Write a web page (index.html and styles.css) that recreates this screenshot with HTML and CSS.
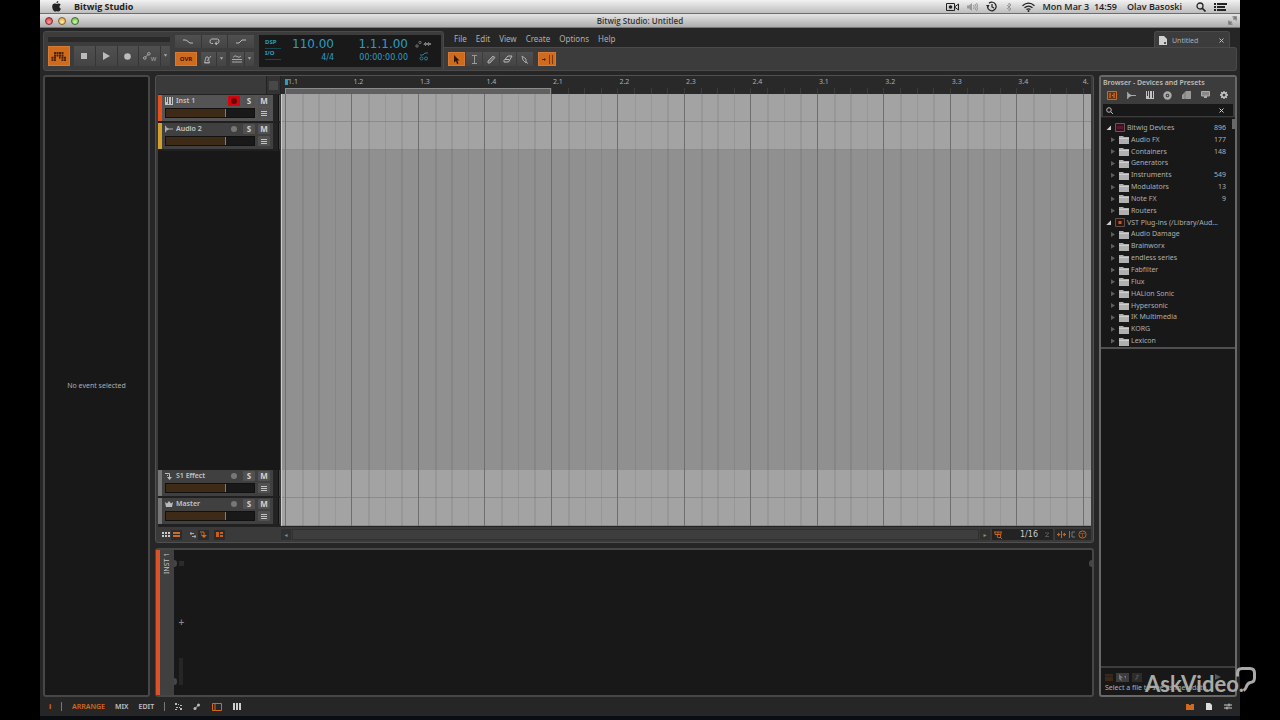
FILE: index.html
```html
<!DOCTYPE html>
<html lang="en">
<head>
<meta charset="utf-8">
<title>Bitwig Studio: Untitled</title>
<link rel="stylesheet" href="styles.css">
</head>
<body>
<svg class="defs" aria-hidden="true">
  <symbol id="folder" viewBox="0 0 10 9"><path d="M0 1h4l1 1h5v7H0z" fill="#b0b0b0"/><path d="M0 3h10v1H0z" fill="#cfcfcf"/></symbol>
  <symbol id="lines" viewBox="0 0 6 5"><path d="M0 0h6v1H0zM0 2h6v1H0zM0 4h6v1H0z" fill="#c2c2c2" shape-rendering="crispEdges"/></symbol>
  <symbol id="keys" viewBox="0 0 8 8"><path d="M0 0h1v5h1V0h1v7h1V0h1v5h0V0h1v7h1V0h1v8H0z" fill="#c4c4c4" shape-rendering="crispEdges"/></symbol>
  <symbol id="wave" viewBox="0 0 10 8"><path d="M0 0h1l1 2 3 1.500h5v1H5L2 6 1 8H0z" fill="#a9a9a9"/></symbol>
  <symbol id="down" viewBox="0 0 6 4"><path d="M1 0h4L3 3z" fill="#aaa"/></symbol>
</svg>
<div class="desktop">
  <div class="macbar">
    <svg class="apple" viewBox="0 0 12 12"><path d="M8 0C6.500.3 5.800 1.300 6 2.500 7.300 2.400 8 1.300 8 0M6 3.300C4.500 2.500 1.500 2.400 1.300 6c0 2.500 1.600 5.500 3 5.500.8 0 1-.4 1.900-.4s1.200.4 2 .4c1.200 0 2.200-1.900 2.600-3C8.800 7.600 8.700 4.900 10.500 4 9.200 2.300 7.200 2.800 6 3.300" fill="#222"/></svg>
    <b class="appname">Bitwig Studio</b>
    <div class="status">
      <svg width="13" height="10" viewBox="0 0 13 10"><path d="M.5 1.500h8v7h-8zM8.500 5l4-3v6z" fill="none" stroke="#222"/><circle cx="4.500" cy="5" r="1.800" fill="#222"/></svg>
      <svg width="11" height="10" viewBox="0 0 11 10"><path d="M0 3.500h2L5 1v8L2 6.500H0z" fill="#999"/><path d="M6.500 3q1.500 2 0 4M8 2q2.500 3 0 6M9.500 1q3 4 0 8" fill="none" stroke="#888" stroke-width=".8"/></svg>
      <svg width="11" height="11" viewBox="0 0 11 11"><path d="M1.500 6A4.300 4.300 0 1 0 3 2.200M6 3v3l2 1" fill="none" stroke="#222" stroke-width="1.200"/><path d="M0 4h3.500L2 7z" fill="#222"/></svg>
      <svg width="9" height="10" viewBox="0 0 7 10"><path d="M1 3l4 4-2 2V1l2 2-4 4" fill="none" stroke="#999"/></svg>
      <svg width="13" height="10" viewBox="0 0 13 10"><path d="M.5 3.800Q6.500-1.500 12.500 3.800M2.500 5.800q4-3.400 8 0M4.500 7.600q2-1.600 4 0" fill="none" stroke="#222" stroke-width="1.300"/><circle cx="6.500" cy="9" r="1" fill="#222"/></svg>
      <span>Mon Mar 3&nbsp; 14:59</span>
      <span class="user">Olav Basoski</span>
      <svg width="10" height="10" viewBox="0 0 10 10"><circle cx="4" cy="4" r="3" fill="none" stroke="#222" stroke-width="1.300"/><path d="M6 6l3.500 3.500" stroke="#222" stroke-width="1.600"/></svg>
      <svg width="13" height="10" viewBox="0 0 13 10"><path d="M0 1h2v2H0zM3 1h10v2H3zM0 4h2v2H0zM3 4h8v2H3zM0 7h2v2H0zM3 7h9v2H3z" fill="#222"/></svg>
    </div>
  </div>
  <div class="titlebar">
    <div class="lights"><button class="light red" aria-label="Close"></button><button class="light yellow" aria-label="Minimise"></button><button class="light green" aria-label="Zoom"></button></div>
    <span class="wintitle">Bitwig Studio: Untitled</span>
    <svg class="expand" viewBox="0 0 10 10"><path d="M5 1h4v4M9 1L6 4M1 5v4h4M1 9l3-3" fill="none" stroke="#777" stroke-width="1.500"/></svg>
  </div>

  <header class="top">
    <div class="deck">
      <div class="transport">
        <div class="strip"></div>
        <div class="btns">
          <button class="btn on logo" aria-label="Bitwig"><svg width="16" height="9" viewBox="0 0 16 9"><path d="M3 0h2v2H3zM5.500 0h2v2h-2zM8 0h2v2H8zM10.500 0h2v2h-2zM3 2.400h2v2H3zM5.500 2.400h2v2h-2zM8 2.400h2v2H8zM10.500 2.400h2v2h-2zM.5 4.800h2v2h-2zM3 4.800h2v2H3zM8 4.800h1.500v2H8zM10.500 4.800h2v2h-2zM13 4.800h2v2h-2zM.5 7.200h2V9h-2zM3 7.200h2V9H3zM10.500 7.200h2V9h-2zM13 7.200h2V9h-2z" fill="#4a2209"/></svg></button>
          <div class="group">
            <button class="btn" aria-label="Stop"><svg width="6" height="6"><path d="M0 0h6v6H0z" fill="#bbb"/></svg></button>
            <button class="btn" aria-label="Play"><svg width="7" height="8"><path d="M0 0l7 4-7 4z" fill="#bbb"/></svg></button>
            <button class="btn" aria-label="Record"><svg width="7" height="7"><circle cx="3.500" cy="3.500" r="3.300" fill="#bbb"/></svg></button>
            <button class="btn" aria-label="Automation write"><svg width="8" height="8" viewBox="0 0 8 8"><circle cx="1.800" cy="6" r="1.300" fill="none" stroke="#aaa"/><path d="M2.500 5L5 2.500" stroke="#aaa"/><circle cx="5.800" cy="1.800" r="1.300" fill="none" stroke="#aaa"/></svg><small>W</small></button>
            <button class="btn slim" aria-label="Options"><svg width="5" height="4"><use href="#down"/></svg></button>
          </div>
        </div>
      </div>
      <div class="modes">
        <div class="group low">
          <button class="btn" aria-label="Punch in"><svg width="10" height="5" viewBox="0 0 10 5"><path d="M0 1h3l4 3h3" fill="none" stroke="#bbb"/></svg></button>
          <button class="btn" aria-label="Loop"><svg width="11" height="7" viewBox="0 0 11 7"><path d="M4 5.500H2.500Q1 5.500 1 3.500T2.500 1h6Q10 1 10 3.200T8.500 5.500H6.500M8 3.500L6 5.500l2 1.500" fill="none" stroke="#bbb"/></svg></button>
          <button class="btn" aria-label="Punch out"><svg width="10" height="5" viewBox="0 0 10 5"><path d="M0 4h3l3-3h4" fill="none" stroke="#bbb"/></svg></button>
        </div>
        <div class="modes2">
          <button class="btn on ovr">OVR</button>
          <div class="group"><button class="btn" aria-label="Metronome"><svg width="8" height="9" viewBox="0 0 8 9"><path d="M2 2h2l1.500 6H.5zM3 6l4-5M1 7.500h4" fill="none" stroke="#aaa"/></svg></button><button class="btn slim" aria-label="Metronome options"><svg width="5" height="4"><use href="#down"/></svg></button></div>
          <div class="group"><button class="btn" aria-label="Groove"><svg width="10" height="8" viewBox="0 0 10 8"><path d="M1 2.500q2-3 4-1t4-.5M0 4.500h10M0 7h10" fill="none" stroke="#aaa"/></svg></button><button class="btn slim" aria-label="Groove options"><svg width="5" height="4"><use href="#down"/></svg></button></div>
        </div>
      </div>
      <div class="display">
        <div class="load"><span>DSP</span><i></i><span>I/O</span><i></i></div>
        <div class="nums"><span class="big">110.00</span><span>4/4</span></div>
        <div class="nums pos"><span class="big">1.1.1.00</span><span>00:00:00.00</span></div>
        <div class="dicons">
          <svg width="17" height="9" viewBox="0 0 17 9"><circle cx="2" cy="6" r="1.200" fill="none" stroke="#777"/><circle cx="5" cy="2.500" r="1.200" fill="none" stroke="#777"/><path d="M8 4h1V3h1V2h1v1h2V2h1v1h2v2h-2v1h-1V5h-2v1h-1V5H9z" fill="#777"/></svg>
          <svg width="10" height="9" viewBox="0 0 10 9"><circle cx="2.500" cy="6.500" r="1.500" fill="none" stroke="#287f9b"/><circle cx="7" cy="6.500" r="1.500" fill="none" stroke="#287f9b"/><path d="M1 3h3l2-2h3" fill="none" stroke="#287f9b"/></svg>
        </div>
      </div>
    </div>
    <div class="topright">
      <div class="menurow">
        <nav class="menu"><a href="#">File</a><a href="#">Edit</a><a href="#">View</a><a href="#">Create</a><a href="#">Options</a><a href="#">Help</a></nav>
        <div class="tab"><svg width="8" height="9" viewBox="0 0 8 9"><path d="M0 0h5l3 3v6H0z" fill="#d0d0d0"/><path d="M5 6h2v2H5z" fill="#555"/></svg><span>Untitled</span><button class="x" aria-label="Close tab"><svg width="5" height="5"><path d="M.5.5l4 4M4.500.5l-4 4" stroke="#bbb"/></svg></button></div>
      </div>
      <div class="tools">
        <button class="btn on" aria-label="Pointer"><svg width="7" height="9" viewBox="0 0 7 9"><path d="M1 0l5.500 5.500H4.200L5.500 8.500 4 9 3 6 1 7.500z" fill="#301505"/></svg></button>
        <button class="btn" aria-label="Time selection"><svg width="7" height="9" viewBox="0 0 7 9"><path d="M1 .5h5M1 8.500h5M3.500 0v9" stroke="#999"/></svg></button>
        <button class="btn" aria-label="Pen"><svg width="9" height="9" viewBox="0 0 9 9"><path d="M1 6L6 1l2 1.500L3 8H1z" fill="#777" stroke="#aaa"/></svg></button>
        <button class="btn" aria-label="Eraser"><svg width="10" height="8" viewBox="0 0 10 8"><path d="M1 5.500L5 1h4L5.500 7H1zM2 4.500h4" fill="none" stroke="#bbb"/></svg></button>
        <button class="btn" aria-label="Knife"><svg width="8" height="9" viewBox="0 0 8 9"><path d="M1 1l4 3v4L2 5zM5 7l2 1.500" fill="none" stroke="#aaa"/></svg></button>
        <button class="btn on wide" aria-label="Snap"><svg width="12" height="9" viewBox="0 0 12 9"><path d="M1 4h2V3l2 1.500L3 6V5H1z" fill="#54240a"/><path d="M8.500 0v9M11.500 0v9" stroke="#7c3810"/></svg></button>
      </div>
    </div>
  </header>

  <main class="work">
    <aside class="inspector">No event selected</aside>
    <div class="center">
      <section class="arranger">
        <div class="rulerrow">
          <div class="blank"></div>
          <div class="corner"><i></i></div>
          <div class="ruler">
            <div class="rbeats">
              <span class="first">1.1</span><span>1.2</span><span>1.3</span><span>1.4</span><span>2.1</span><span>2.2</span><span>2.3</span><span>2.4</span><span>3.1</span><span>3.2</span><span>3.3</span><span>3.4</span><span class="last">4.</span>
            </div>
            <div class="looprow"><div class="loop"></div></div>
          </div>
        </div>
        <div class="tracks">
          <div class="heads">
            <div class="track sel">
              <i class="color c1"></i>
              <div class="name"><svg width="8" height="8"><use href="#keys"/></svg>Inst 1</div>
              <button class="tb rec armed" aria-label="Record arm"></button><button class="tb">S</button><button class="tb">M</button>
              <input class="vol" type="range" min="0" max="90" value="61" aria-label="Inst 1 volume"><button class="tb list" aria-label="Lanes"><svg width="6" height="5"><use href="#lines"/></svg></button>
              <i class="meter"></i>
            </div>
            <div class="track">
              <i class="color c2"></i>
              <div class="name"><svg width="8" height="8"><use href="#wave"/></svg>Audio 2</div>
              <button class="tb rec" aria-label="Record arm"></button><button class="tb">S</button><button class="tb">M</button>
              <input class="vol" type="range" min="0" max="90" value="61" aria-label="Audio 2 volume"><button class="tb list" aria-label="Lanes"><svg width="6" height="5"><use href="#lines"/></svg></button>
              <i class="meter"></i>
            </div>
            <div class="void"></div>
            <div class="track">
              <i class="color c3"></i>
              <div class="name"><svg width="8" height="8" viewBox="0 0 8 8"><path d="M0 1.500h4.500V6" fill="none" stroke="#bbb"/><path d="M2 5h5L4.500 8zM2 3h1v1H2z" fill="#bbb"/></svg>S1 Effect</div>
              <button class="tb rec" aria-label="Record arm"></button><button class="tb">S</button><button class="tb">M</button>
              <input class="vol" type="range" min="0" max="90" value="61" aria-label="S1 Effect volume"><button class="tb list" aria-label="Lanes"><svg width="6" height="5"><use href="#lines"/></svg></button>
              <i class="meter"></i>
            </div>
            <div class="track">
              <i class="color c3"></i>
              <div class="name"><svg width="8" height="8" viewBox="0 0 8 8"><path d="M0 2l2 1.500L4 1l2 2.500L8 2 7 7H1z" fill="#bbb"/></svg>Master</div>
              <button class="tb rec" aria-label="Record arm"></button><button class="tb">S</button><button class="tb">M</button>
              <input class="vol" type="range" min="0" max="90" value="61" aria-label="Master volume"><button class="tb list" aria-label="Lanes"><svg width="6" height="5"><use href="#lines"/></svg></button>
              <i class="meter"></i>
            </div>
          </div>
          <div class="canvas">
            <div class="lanes"><i class="lane"></i><i class="lane"></i><i class="empty"></i><i class="lane"></i><i class="lane"></i></div>
            <div class="beats"><i></i><i></i><i></i><i></i><i></i><i></i><i></i><i></i><i></i><i></i><i></i><i></i><i></i></div>
          </div>
        </div>
        <div class="arrfoot">
          <div class="views">
            <button class="ib" aria-label="Clip launcher"><svg width="8" height="5" viewBox="0 0 8 5"><path d="M0 0h2v2H0zM3 0h2v2H3zM6 0h2v2H6zM0 3h2v2H0zM3 3h2v2H3zM6 3h2v2H6z" fill="#ccc"/></svg></button>
            <button class="ib dark" aria-label="Arranger"><svg width="7" height="5" viewBox="0 0 7 5"><path d="M0 0h7v2H0zM0 3h7v2H0z" fill="#d3691e"/></svg></button>
            <button class="ib gap" aria-label="Input output"><svg width="6" height="6" viewBox="0 0 6 6"><path d="M0 1.500h4M2 4.500h4M1 0v3M5 3v3" stroke="#aaa"/></svg></button>
            <button class="ib dark" aria-label="Effects"><svg width="7" height="7" viewBox="0 0 7 7"><path d="M0 1h4v3" fill="none" stroke="#d3691e"/><path d="M1 4h6L4 7zM1 2.500h1v1H1z" fill="#d3691e"/></svg></button>
            <button class="ib dark gap2" aria-label="Track size"><svg width="7" height="5" viewBox="0 0 7 5"><path d="M0 0h3v5H0zM4 0h3v2H4zM4 3h3v2H4z" fill="#c8601a"/></svg></button>
          </div>
          <div class="scroll"><button class="sb" aria-label="Scroll left">◂</button><div class="bar"></div><button class="sb" aria-label="Scroll right">▸</button></div>
          <div class="grid16">
            <svg width="9" height="8" viewBox="0 0 9 8"><path d="M0 1h8M1 3.500h6M1 1v2.500M4 1v2.500M7 1v2.500" stroke="#c8641c"/><circle cx="5" cy="5" r="1.800" fill="none" stroke="#c8641c"/><path d="M6 6l2 2" stroke="#c8641c"/></svg>
            <select aria-label="Grid"><option>1/16</option></select>
            <svg width="5" height="5"><path d="M0 1h4M1 4l3-3M0 4.500h4" stroke="#555"/></svg>
          </div>
          <div class="snaps">
            <svg width="9" height="7" viewBox="0 0 9 7"><path d="M4.500 0v7" stroke="#c8641c"/><path d="M0 3h1V1.500l2.500 2L1 5.500V4H0zM9 3H8V1.500l-2.500 2 2.500 2V4h1z" fill="#c8641c"/></svg>
            <svg width="6" height="7" viewBox="0 0 6 7"><path d="M.5 0v7M6 1H3v5h3" fill="none" stroke="#777"/></svg>
            <svg width="9" height="9" viewBox="0 0 9 9"><circle cx="4.500" cy="4.500" r="3.600" fill="none" stroke="#c8641c"/><path d="M4.500 3v4M1 3.500h7" stroke="#8c4513"/></svg>
          </div>
        </div>
      </section>
      <section class="device">
        <i class="dcolor"></i>
        <div class="dname">INST 1</div>
        <div class="dbody">
          <div class="dside top1"><i class="half"></i><i class="sq"></i></div>
          <span class="plus">+</span>
          <div class="dside"><i class="half"></i><i class="lv"></i></div>
        </div>
        <i class="half right"></i>
      </section>
    </div>

    <aside class="browser">
      <h2>Browser - Devices and Presets</h2>
      <div class="btabs">
        <button class="ib" aria-label="Devices"><svg width="10" height="9" viewBox="0 0 10 9"><path d="M.5.500h9v8h-9z" fill="#6b330d" stroke="#d06a20"/><path d="M3 2v5M5 4.500h1M7 2v5" stroke="#e08030"/></svg></button>
        <button class="ib" aria-label="Samples"><svg width="9" height="7"><use href="#wave"/></svg></button>
        <button class="ib" aria-label="Presets"><svg width="8" height="8"><use href="#keys"/></svg></button>
        <button class="ib" aria-label="Multisamples"><svg width="9" height="9"><circle cx="4.500" cy="4.500" r="3" fill="none" stroke="#aaa" stroke-width="2.400"/><circle cx="4.500" cy="4.500" r=".8" fill="#aaa"/></svg></button>
        <button class="ib" aria-label="Clips"><svg width="9" height="8"><path d="M0 8V4l4-4h5v8z" fill="#999"/><path d="M3 1v7" stroke="#777"/></svg></button>
        <button class="ib" aria-label="Files"><svg width="9" height="8"><path d="M.5 .5h8V5h-8z" fill="#888" stroke="#aaa"/><path d="M3 7h3V5H3z" fill="#aaa"/></svg></button>
        <button class="ib" aria-label="Settings"><svg width="8" height="8" viewBox="0 0 8 8"><circle cx="4" cy="4" r="2.200" fill="none" stroke="#ccc" stroke-width="1.400"/><path d="M4 0v1.500M4 6.500V8M0 4h1.500M6.500 4H8M1.200 1.200l1 1M5.800 5.800l1 1M1.200 6.800l1-1M5.800 2.200l1-1" stroke="#ccc" stroke-width="1.300"/></svg></button>
      </div>
      <div class="search">
        <svg width="7" height="7" viewBox="0 0 7 7"><circle cx="3" cy="3" r="2.300" fill="none" stroke="#bbb"/><path d="M4.600 4.600L7 7" stroke="#bbb"/></svg>
        <input type="text" aria-label="Search">
        <button class="x" aria-label="Clear"><svg width="5" height="5"><path d="M.5.500l4 4M4.500.500l-4 4" stroke="#ccc"/></svg></button>
      </div>
      <div class="results">
        <i class="thumb"></i>
        <ul class="tree">
          <li class="root"><i class="open"></i><svg width="10" height="9"><path d="M.5.500h9v8h-9z" fill="#3c0f1c" stroke="#5e5e5e"/><path d="M3 3v3M5 3v3M7 3v3" stroke="#7c2340"/></svg><span>Bitwig Devices</span><b>896</b></li>
          <li><i></i><svg width="10" height="9"><use href="#folder"/></svg><span>Audio FX</span><b>177</b></li>
          <li><i></i><svg width="10" height="9"><use href="#folder"/></svg><span>Containers</span><b>148</b></li>
          <li><i></i><svg width="10" height="9"><use href="#folder"/></svg><span>Generators</span></li>
          <li><i></i><svg width="10" height="9"><use href="#folder"/></svg><span>Instruments</span><b>549</b></li>
          <li><i></i><svg width="10" height="9"><use href="#folder"/></svg><span>Modulators</span><b>13</b></li>
          <li><i></i><svg width="10" height="9"><use href="#folder"/></svg><span>Note FX</span><b>9</b></li>
          <li><i></i><svg width="10" height="9"><use href="#folder"/></svg><span>Routers</span></li>
          <li class="root"><i class="open"></i><svg width="10" height="9"><path d="M.5.500h9v8h-9z" fill="#2c1510" stroke="#5e5048"/><path d="M3.500 3h3v3h-3z" fill="#d0532c"/></svg><span>VST Plug-ins (/Library/Aud...</span></li>
          <li><i></i><svg width="10" height="9"><use href="#folder"/></svg><span>Audio Damage</span></li>
          <li><i></i><svg width="10" height="9"><use href="#folder"/></svg><span>Brainworx</span></li>
          <li><i></i><svg width="10" height="9"><use href="#folder"/></svg><span>endless series</span></li>
          <li><i></i><svg width="10" height="9"><use href="#folder"/></svg><span>Fabfilter</span></li>
          <li><i></i><svg width="10" height="9"><use href="#folder"/></svg><span>Flux</span></li>
          <li><i></i><svg width="10" height="9"><use href="#folder"/></svg><span>HALion Sonic</span></li>
          <li><i></i><svg width="10" height="9"><use href="#folder"/></svg><span>Hypersonic</span></li>
          <li><i></i><svg width="10" height="9"><use href="#folder"/></svg><span>IK Multimedia</span></li>
          <li><i></i><svg width="10" height="9"><use href="#folder"/></svg><span>KORG</span></li>
          <li><i></i><svg width="10" height="9"><use href="#folder"/></svg><span>Lexicon</span></li>
        </ul>
      </div>
      <div class="detail"></div>
      <div class="preview">
        <div class="picons">
          <svg width="8" height="7"><path d="M0 0h8v7H0z" fill="#3c2814"/><path d="M0 2.500h8" stroke="#222"/></svg>
          <svg width="13" height="9"><path d="M0 0h13v9H0z" fill="#3d3d3d"/><path d="M3 1l4 4H5l1 3-3-2zM8 3h2v3" fill="#777"/></svg>
          <svg width="10" height="9"><path d="M0 0h10v9H0z" fill="#2c2c2c"/><path d="M5 2v4H3M5 2l2 1" fill="none" stroke="#555"/></svg>
          <svg class="pplay" width="6" height="6"><path d="M0 0l6 3-6 3z" fill="#555"/></svg>
        </div>
        <p>Select a file to see its metadata.</p>
      </div>
    </aside>
  </main>

  <footer class="foot">
    <b class="or info">i</b><i class="sep"></i>
    <button class="or mode">ARRANGE</button><button class="mode">MIX</button><button class="mode">EDIT</button><i class="sep"></i>
    <button class="ib" aria-label="Clips"><svg width="7" height="7"><path d="M0 0h2v2H0zM3 1h1v1H3zM5 2h2v1H5zM1 4h2v1H1zM4 4h1v1H4zM0 6h2v1H0zM5 5h2v2H5z" fill="#bbb"/></svg></button>
    <button class="ib" aria-label="Automation"><svg width="8" height="8"><circle cx="2" cy="5.500" r="1.500" fill="#bbb"/><circle cx="5.500" cy="2" r="1.500" fill="#bbb"/><path d="M2 5.500L5.500 2" stroke="#bbb"/></svg></button>
    <button class="ib" aria-label="Devices"><svg width="10" height="8"><path d="M.5.500h9v7h-9zM3 .5v7" fill="none" stroke="#d3691e"/></svg></button>
    <button class="ib" aria-label="Mixer"><svg width="8" height="7"><path d="M0 0h2v7H0zM3 0h2v7H3zM6 0h2v7H6z" fill="#ccc"/></svg></button>
    <div class="footright">
      <button class="ib" aria-label="Browser"><svg width="8" height="6"><path d="M0 0h3v1h2V0h3v6H0z" fill="#d3691e"/></svg></button>
      <button class="ib" aria-label="Project"><svg width="6" height="7"><path d="M0 0h4l2 2v5H0z" fill="#ddd"/></svg></button>
      <button class="ib" aria-label="Mappings"><svg width="8" height="7"><path d="M0 2h8M0 5h8M5 .5v3M3 3.500v3" stroke="#ccc"/></svg></button>
    </div>
  </footer>
</div>
<div class="watermark"><span>AskVideo.</span><svg width="20" height="26" viewBox="0 0 20 26"><path d="M1.500 9.500V6q0-4.500 4.500-4.500h8q4.500 0 4.500 4.500v5q0 4-4 4.500-3 .5-4.500 5-.8 2-2.500 3" fill="none" stroke="#a9aaa7" stroke-width="3" stroke-linejoin="round"/></svg></div>
</body>
</html>
```
FILE: styles.css
```css
* { box-sizing: border-box; }
body { margin: 0; background: #000; color: #aeaeae; font: 7px/10px "Noto Sans", "Open Sans", sans-serif; }
button, input, select { font: inherit; color: inherit; border: 0; padding: 0; margin: 0; background: none; }
svg { display: block; flex: none; }
i, b, small { font-style: normal; }
a { color: inherit; text-decoration: none; }
.defs { position: absolute; width: 0; height: 0; }

.desktop { min-height: 100vh; margin: 0 40px; display: flex; flex-direction: column; background: #262626; border-bottom: 4px solid #0a0d12; }

.macbar { height: 14px; display: flex; align-items: center; padding: 0 13px 0 11px; background: linear-gradient(#f2f2f2, #bdbdbd); border-bottom: 1px solid #6c6c6c; color: #222; font-size: 9px; font-family: "Open Sans", sans-serif; font-weight: 600; }
.apple { width: 11px; height: 11px; }
.appname { margin-left: 12px; font-weight: 700; }
.status { margin-left: auto; display: flex; align-items: center; gap: 8px; }
.user { margin: 0 6px 0 2px; }

.titlebar { height: 14px; display: grid; grid-template-columns: 1fr auto 1fr; align-items: center; padding: 0 3px; background: linear-gradient(#e4e4e4, #adadad); border-bottom: 1px solid #777; color: #333; font: 600 8px/10px "Open Sans", sans-serif; }
.lights { display: flex; gap: 5px; padding-left: 2px; }
.light { width: 8px; height: 8px; border-radius: 50%; border: 1px solid #555; }
.red { background: radial-gradient(circle at 50% 70%, #ff9c9c, #c8333a); border-color: #7f2b2f; }
.yellow { background: radial-gradient(circle at 50% 70%, #ffeeaa, #dd9c2e); border-color: #80602b; }
.green { background: radial-gradient(circle at 50% 70%, #ccffaa, #67ad44); border-color: #3f6b2f; }
.expand { width: 9px; height: 9px; justify-self: end; }

.top { display: flex; height: 43px; padding: 3px 3px 0; }
.deck { flex: none; display: flex; gap: 5px; padding: 3px 2px 3px 4px; background: #3c3c3c; border: 1px solid #4a4a4a; border-radius: 3px 3px 0 3px; }
.btn { display: flex; align-items: center; justify-content: center; background: linear-gradient(#505050, #444); color: #aaa; min-width: 0; }
.btn small { font-size: 6px; line-height: 6px; margin-top: 5px; }
.btn.on { background: #cf6b1d; border: 1px solid #d67a35; color: #33180a; }
.group { display: flex; gap: 1px; background: #363636; }
.group .btn { flex: 1; }
.group .slim { flex: 0 0 9px; }
.transport { width: 122px; padding-top: 2px; }
.strip { height: 5px; background: #292929; margin-bottom: 4px; }
.btns { display: flex; gap: 4px; height: 20px; }
.logo { width: 22px; }
.btns .group { flex: 1; }
.modes { width: 79px; display: flex; flex-direction: column; gap: 4px; }
.low { height: 13px; }
.modes2 { display: flex; gap: 4px; height: 14px; }
.ovr { width: 22px; font-size: 6px; font-weight: 700; }
.modes2 .group { flex: 1; }
.display { display: flex; width: 182px; height: 32px; padding: 2px 9px 0 6px; background: #191919; color: #2b9dc2; }
.load { width: 16px; font: 700 6px/8px "Noto Sans", sans-serif; margin-top: 1px; }
.load span { display: block; }
.load i { display: block; height: 3px; border-bottom: 1px solid #1c4656; }
.nums { display: flex; flex-direction: column; align-items: flex-end; width: 53px; font: 8px/12px "DejaVu Sans", sans-serif; }
.nums .big { font-size: 12px; line-height: 15px; }
.pos { width: 74px; }
.dicons { margin-left: auto; display: flex; flex-direction: column; align-items: center; gap: 3px; padding-top: 3px; }

.topright { flex: 1; min-width: 0; display: flex; flex-direction: column; }
.menurow { height: 17px; display: flex; justify-content: space-between; padding: 0 7px 0 10px; }
.menu { display: flex; gap: 9px; align-items: center; font-size: 8px; }
.tab { width: 76px; display: flex; align-items: center; gap: 5px; padding: 2px 5px 0 4px; background: #3c3c3c; border: 1px solid #4a4a4a; border-bottom: 0; border-radius: 3px 3px 0 0; }
.tab .x { margin-left: auto; }
.tools { flex: 1; display: flex; gap: 1px; padding: 4px; background: #3c3c3c; border: solid #4a4a4a; border-width: 1px 1px 1px 0; border-radius: 0 3px 3px 0; }
.tools .btn { width: 17px; height: 14px; }
.tools .btn + .btn { width: 16px; }
.tools .btn + .wide { width: 18px; margin-left: 4px; }

.work { flex: 1; display: flex; gap: 5px; padding: 4px 3px 0; min-height: 0; }
.inspector { width: 107px; flex: none; display: flex; align-items: center; justify-content: center; background: #181818; border: 2px solid #474747; border-radius: 3px; }
.center { flex: 1; min-width: 0; display: flex; flex-direction: column; gap: 5px; }
.arranger { flex: 1; display: flex; flex-direction: column; background: #3a3a3a; border: 1px solid #505050; border-radius: 3px; padding: 0 2px; }
.rulerrow { display: flex; height: 18px; }
.blank { width: 108px; background: #3a3a3a; }
.corner { width: 15px; border: solid #222; border-width: 0 1px; background: #333; display: flex; align-items: flex-end; justify-content: center; padding-bottom: 4px; }
.corner i { width: 9px; height: 9px; background: #484848; }
.ruler { flex: 1; min-width: 0; background: #292929; display: flex; flex-direction: column; padding-left: 4px; }
.rbeats { display: flex; overflow: hidden; height: 12px; }
.rbeats span { flex: 0 0 8.25%; padding-left: 2px; line-height: 12px; }
.rbeats .first { padding-left: 3px; background: linear-gradient(100deg, #2b9dc2 60%, transparent 62%) 0 3px / 5px 6px no-repeat; }
.rbeats .last { flex: 1; padding: 0; }
.looprow { height: 6px; background: repeating-linear-gradient(to right, #3c3c3c 0 1px, transparent 1px 2.0625%); }
.loop { width: 33%; height: 6px; background: #606060; border: solid #8c8c8c; border-width: 1px 1px 0; }
.tracks { flex: 1; display: flex; }
.heads { width: 122px; margin-right: 1px; display: flex; flex-direction: column; border-top: 1px solid #222; background: #181818; }
.track { height: 28px; display: grid; grid-template-columns: 4px 60px 12px 12px 12px 6px; grid-template-rows: 12px 12px; column-gap: 3px; padding-top: 0; background: #404040; border-bottom: 2px solid #202020; }
.sel { background: #545454; }
.color { grid-row: 1 / 3; height: 26px; }
.c1 { background: #e6511b; }
.c2 { background: #d3a02a; }
.c3 { background: #777; }
.name { display: flex; align-items: center; gap: 3px; font-weight: 600; color: #c4c4c4; white-space: nowrap; }
.tb { display: flex; align-items: center; justify-content: center; height: 10px; align-self: center; background: #515151; color: #d2d2d2; font-weight: 700; font-size: 8px; line-height: 10px; border-radius: 1px; }
.rec { background: none; }
.rec::before { content: ""; width: 6px; height: 6px; border-radius: 50%; background: #777; }
.armed { background: #d3050d; }
.armed::before { background: #6c0307; }
.vol { appearance: none; grid-column: 2 / 5; grid-row: 2; width: 100%; height: 10px; align-self: center; border: 1px solid #111; background: linear-gradient(to right, #3d2b17 67%, #191919 67%); }
.vol::-webkit-slider-thumb { appearance: none; width: 1px; height: 8px; background: #c8691f; }
.list { grid-column: 5; grid-row: 2; }
.meter { grid-column: 6; grid-row: 1 / 3; height: 26px; background: #242424; border-right: 1px solid #111; }
.void { flex: 1; }
.canvas { flex: 1; min-width: 0; display: grid; border-left: 1px solid #ccc; background: #909090; }
.canvas > div { grid-area: 1 / 1; }
.lanes { display: flex; flex-direction: column; }
.lane { height: 28px; background: #a3a3a3; border-bottom: 1px solid #8b8b8b; }
.empty { flex: 1; }
.beats { display: flex; overflow: hidden; padding-left: 3px; }
.beats i { flex: 0 0 8.25%; border-left: 1px solid #6e6e6e; background: linear-gradient(to right, transparent 25%, #00000012 25% 27%, transparent 27% 50%, #00000012 50% 52%, transparent 52% 75%, #00000012 75% 77%, transparent 77%); }
.arrfoot { height: 16px; display: flex; align-items: center; border-top: 1px solid #222; }
.views { width: 123px; display: flex; align-items: center; padding-left: 2px; }
.ib { display: flex; align-items: center; justify-content: center; }
.views .ib { width: 11px; height: 10px; }
.dark { background: #2b2b2b; }
.views .gap { margin-left: 5px; }
.views .gap2 { margin-left: 5px; }
.scroll { flex: 1; height: 11px; display: flex; gap: 1px; }
.sb { width: 10px; background: #303030; color: #888; font: 6px/10px "DejaVu Sans", sans-serif; }
.bar { flex: 1; background: #3e3e3e; border: 1px solid #303030; }
.grid16 { width: 61px; height: 11px; margin: 0 2px; padding: 0 3px 0 2px; display: flex; align-items: center; background: #232323; }
.grid16 select { appearance: none; flex: 1; min-width: 0; text-align: right; padding-right: 7px; font: 8px/10px "DejaVu Sans", sans-serif; color: #ccc; }
.snaps { width: 36px; height: 11px; display: flex; align-items: center; justify-content: space-between; padding: 0 4px 0 2px; background: #292929; }

.device { height: 149px; flex: none; display: flex; background: #181818; border: 2px solid #474747; border-left-width: 1px; border-radius: 3px; }
.dcolor { width: 4px; background: #dc5126; }
.dname { width: 14px; padding-bottom: 4px; writing-mode: vertical-rl; transform: rotate(180deg); text-align: right; line-height: 14px; background: #404040; color: #c4c4c4; padding: 0 0 3px; }
.dbody { flex: 1; display: flex; flex-direction: column; justify-content: space-between; padding: 10px 0; }
.dside { display: flex; align-items: flex-end; gap: 2px; }
.top1 { align-items: center; }
.half { width: 3px; height: 7px; border-radius: 0 4px 4px 0; background: #454545; }
.right { border-radius: 4px 0 0 4px; margin-top: 10px; }
.sq { width: 5px; height: 5px; background: #2b2b2b; }
.lv { width: 4px; height: 27px; background: #262626; }
.plus { margin: 20px 0 0 4px; font: 700 8px/8px "DejaVu Sans", sans-serif; color: #888; }

.browser { width: 138px; flex: none; display: flex; flex-direction: column; border: 2px solid #686868; border-radius: 3px; background: #181818; }
.browser h2 { margin: 0; padding: 0 2px; font-size: 7px; line-height: 11px; font-weight: 600; color: #bcbcbc; background: #3c3c3c; }
.btabs { display: flex; justify-content: space-between; height: 16px; padding: 0 7px 2px 6px; background: #3c3c3c; }
.search { height: 13px; display: flex; align-items: center; gap: 4px; padding: 0 9px 0 3px; background: #181818; border: solid #3c3c3c; border-width: 0 2px 1px; }
.search input { flex: 1; min-width: 0; outline: 0; }
.results { display: grid; padding: 4px 0 0; border-top: 1px solid #242424; border-bottom: 2px solid #4f4f4f; }
.thumb { grid-area: 1 / 1; justify-self: end; width: 3px; height: 10px; margin-top: -3px; background: #686868; }
.tree { grid-area: 1 / 1; list-style: none; margin: 0; padding: 0 9px 0 5px; height: 225px; display: grid; grid-auto-rows: 1fr; }
.tree li { display: flex; align-items: center; padding-left: 5px; min-height: 0; white-space: nowrap; }
.tree li.root { padding-left: 0; }
.tree i { width: 4px; height: 5px; margin-right: 4px; background: #5e5e5e; clip-path: polygon(0 0, 100% 50%, 0 100%); }
.tree .open { width: 5px; background: #ccc; clip-path: polygon(100% 0, 100% 100%, 0 100%); }
.tree span { margin-left: 2px; }
.tree b { margin-left: auto; font-weight: 400; }
.detail { flex: 1; }
.preview { height: 29px; border-top: 2px solid #3d3d3d; padding: 4px 4px 0; }
.picons { display: flex; gap: 3px; align-items: center; height: 10px; }
.pplay { margin-left: auto; margin-right: 10px; }
.preview p { margin: 1px 0 0; color: #b0b0b0; white-space: nowrap; }

.foot { height: 19px; display: flex; align-items: center; padding: 0 8px 0 9px; color: #c0c0c0; font-weight: 600; }
.or { color: #d3691e; }
.info { width: 4px; margin-right: 8px; font-weight: 800; }
.sep { width: 1px; height: 9px; background: #777; }
.mode { margin-left: 10px; }
.mode + .sep { margin: 0 10px; }
.foot > .ib { margin-right: 11px; }
.footright { margin-left: auto; display: flex; gap: 12px; }

.watermark { position: absolute; right: 24px; bottom: 24px; display: flex; align-items: flex-end; color: #a9aaa7; font: 700 22px/24px Lato, sans-serif; }
.watermark svg { margin: 0 0 3px -8px; }
```
